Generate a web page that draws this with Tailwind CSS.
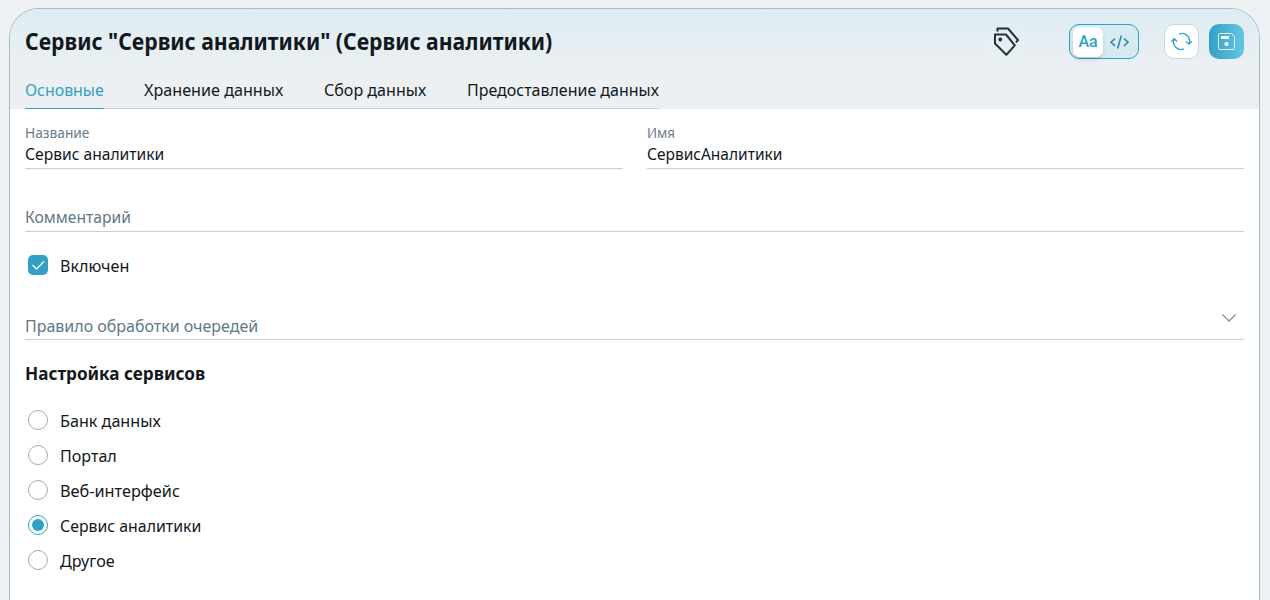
<!DOCTYPE html>
<html lang="ru">
<head>
    <meta charset="UTF-8">
    <meta name="viewport" content="width=device-width, initial-scale=1.0">
    <title>Сервис аналитики</title>
    <script src="https://cdn.jsdelivr.net/npm/@tailwindcss/browser@4"></script>
</head>
<body class="h-screen overflow-hidden bg-[#edf1f4] pt-2 pr-[10px] pl-[9px] font-['Noto_Sans',sans-serif] text-[17px] leading-6 text-[#12181c]">
    <div class="h-[592px] overflow-hidden rounded-t-[30px] border border-b-0 border-[#a4bcc5] bg-white">

        <!-- Шапка -->
        <header class="h-[100px] bg-[#ecf0f3] bg-linear-to-b from-[#dcecf3] to-[#ecf0f3] to-60% px-[15px] pt-[15px]">
            <div class="flex h-[35px] items-center">
                <h1 class="grow origin-left scale-x-[0.883] pb-0.5 text-2xl font-bold whitespace-nowrap">Сервис "Сервис аналитики" (Сервис аналитики)</h1>
                <button class="mr-[45px] size-[35px] shrink-0 rounded-[10px] border border-white/30">
                    <svg class="-m-px size-[35px]" viewBox="0 0 35 35" fill="none" stroke="#25313a" stroke-width="2" stroke-linejoin="round">
                        <path d="M6 10.500h11L25.800 21.300 17.300 30.800 6 19.500z"/>
                        <path d="M8.500 7.500v-3H19L29 16l-2 2.300"/>
                        <circle cx="11.300" cy="15.500" r="1.900" fill="#25313a" stroke="none"/>
                    </svg>
                </button>
                <div class="mr-[25px] flex h-[35px] w-[70px] shrink-0 items-center rounded-[10px] border border-[#30a1c5] bg-[#d7eaf1] pl-[3px]">
                    <span class="flex h-[30px] w-[30px] items-center justify-center rounded-[7px] bg-white font-['Roboto',sans-serif] text-base font-medium text-[#30a1c5] shadow-md">Aa</span>
                    <svg class="ml-[6px] h-[14px] w-5" viewBox="0 0 20 14" fill="none" stroke="#2a87a5" stroke-width="1.500">
                        <path d="M6 3.500L2 7.200 6 10.900M15 3.500l4 3.700-4 3.700M12.300 .500L8.700 13.500"/>
                    </svg>
                </div>
                <button class="mr-[10px] flex size-[35px] shrink-0 items-center justify-center rounded-[10px] border border-[#ccd5dc] bg-white">
                    <svg class="size-[21px] shrink-0" viewBox="0 0 21 21" fill="none" stroke="#30a1c5" stroke-width="1.300">
                        <path d="M8 3.200A7.500 7.500 0 0 1 18 13M13 17.900A7.500 7.500 0 0 1 3.200 8M15.200 10.500L18 13.200l2.900-2.700M.300 10.500L3.200 7.700 6 10.500"/>
                    </svg>
                </button>
                <button class="flex size-[35px] shrink-0 items-center justify-center rounded-[10px] bg-linear-to-r from-[#30a1c5] to-[#63c5e2]">
                    <svg class="size-[17px]" viewBox="0 0 17 17" fill="none" stroke="#e6f5fa">
                        <path d="M1.500.500h12l3 3v12a1 1 0 0 1-1 1h-14a1 1 0 0 1-1-1v-14a1 1 0 0 1 1-1z"/>
                        <path d="M3 3h8v3H3z" fill="#fff" stroke="none"/>
                        <circle cx="8.500" cy="11" r="2.100" fill="#fff" stroke="none"/>
                    </svg>
                </button>
            </div>
            <nav class="mt-[18px] flex w-fit gap-10 border-b border-[#c8d0d6] whitespace-nowrap">
                <a class="-mb-px h-[32px] w-[79px] border-b border-[#30a1c5] pt-px text-[#30a1c5]"><span class="inline-block origin-left scale-x-[0.935]">Основные</span></a>
                <a class="w-[140px] pt-px"><span class="inline-block origin-left scale-x-[0.95]">Хранение данных</span></a>
                <a class="w-[102.500px] pt-px"><span class="inline-block origin-left scale-x-[0.945]">Сбор данных</span></a>
                <a class="w-[192px] pt-px"><span class="inline-block origin-left scale-x-[0.94]">Предоставление данных</span></a>
            </nav>
        </header>

        <!-- Поля формы -->
        <main class="px-[15px] whitespace-nowrap">
            <div class="grid grid-cols-2 gap-6">
                <label class="h-[60px] border-b border-[#c8d0d6] pt-[14px]">
                    <div class="h-[19px] text-sm leading-5 text-[#667c8b]"><span class="inline-block origin-left scale-x-[0.98]">Название</span></div>
                    <span class="inline-block origin-left scale-x-[0.92]">Сервис аналитики</span>
                </label>
                <label class="h-[60px] border-b border-[#c8d0d6] pt-[14px]">
                    <div class="h-[19px] text-sm leading-5 text-[#667c8b]"><span class="inline-block origin-left scale-x-[0.95]">Имя</span></div>
                    <span class="inline-block origin-left scale-x-[0.912]">СервисАналитики</span>
                </label>
            </div>
            <div class="h-[63px] border-b border-[#c8d0d6] pt-[36px] text-[#5f7888]"><span class="inline-block origin-left scale-x-[0.92]">Комментарий</span></div>
            <label class="mt-[21px] flex h-6 items-center gap-3 pl-[3px]">
                <span class="flex size-5 items-center justify-center rounded-[5px] bg-[#30a1c5]">
                    <svg class="size-5" viewBox="0 0 20 20" fill="none" stroke="#fff" stroke-width="1.300"><path d="M4.500 10l4 4 7.500-7.500"/></svg>
                </span>
                <span class="origin-left scale-x-[0.945] pt-0.5">Включен</span>
            </label>
            <div class="mt-[37px] flex h-[26px] justify-between border-b border-[#c8d0d6] pr-2 text-[#5f7888]">
                <span class="origin-left scale-x-[0.94]">Правило обработки очередей</span>
                <svg class="h-2 w-[14px]" viewBox="0 0 14 8" fill="none" stroke="#7f93a1" stroke-width="1.300"><path d="M.500.500L7 7 13.500.500"/></svg>
            </div>

            <h2 class="mt-[21px] w-fit origin-left scale-x-[0.952] text-lg leading-6 font-bold">Настройка сервисов</h2>
            <div class="mt-[17px] flex flex-col pl-[3px]">
                <label class="flex h-[35px] items-center gap-3"><i class="size-5 rounded-full border border-[#9dabb5]"></i><span class="origin-left scale-x-[0.95] pt-0.5">Банк данных</span></label>
                <label class="flex h-[35px] items-center gap-3"><i class="size-5 rounded-full border border-[#9dabb5]"></i><span class="origin-left scale-x-[0.945] pt-0.5">Портал</span></label>
                <label class="flex h-[35px] items-center gap-3"><i class="size-5 rounded-full border border-[#9dabb5]"></i><span class="origin-left scale-x-[0.957] pt-0.5">Веб-интерфейс</span></label>
                <label class="flex h-[35px] items-center gap-3"><i class="size-5 rounded-full border border-[#30a1c5] bg-[#30a1c5] bg-clip-content p-[3px]"></i><span class="origin-left scale-x-[0.933] pt-0.5">Сервис аналитики</span></label>
                <label class="flex h-[35px] items-center gap-3"><i class="size-5 rounded-full border border-[#9dabb5]"></i><span class="origin-left scale-x-[0.95] pt-0.5">Другое</span></label>
            </div>
        </main>
    </div>
</body>
</html>
